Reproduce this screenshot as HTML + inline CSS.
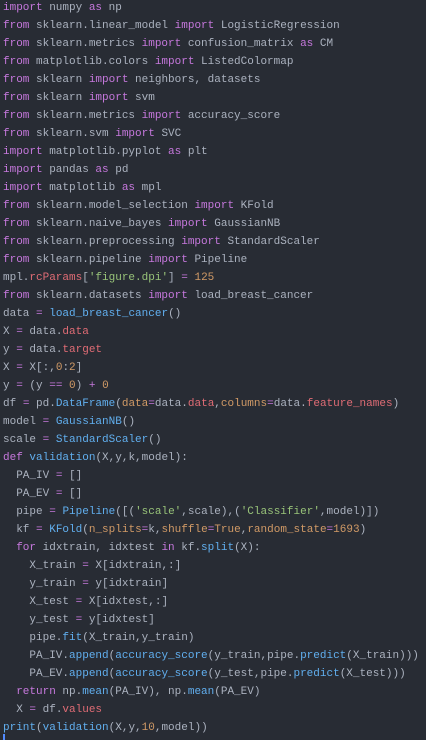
<!DOCTYPE html><html><head><style>
html,body{margin:0;padding:0;background:#282c34;width:426px;height:740px;overflow:hidden}
pre{margin:0;padding:0 0 0 3px;position:absolute;top:-1px;left:0;font-family:"Liberation Mono",monospace;font-size:11px;line-height:18px;color:#abb2bf;white-space:pre}
.k{color:#c678dd}.f{color:#61afef}.s{color:#98c379}.n{color:#d19a66}.r{color:#e06c75}
#cur{position:absolute;left:3px;top:734px;width:2px;height:6px;background:#528bff}
</style></head><body><pre><span class="k">import</span> numpy <span class="k">as</span> np
<span class="k">from</span> sklearn.linear_model <span class="k">import</span> LogisticRegression
<span class="k">from</span> sklearn.metrics <span class="k">import</span> confusion_matrix <span class="k">as</span> CM
<span class="k">from</span> matplotlib.colors <span class="k">import</span> ListedColormap
<span class="k">from</span> sklearn <span class="k">import</span> neighbors, datasets
<span class="k">from</span> sklearn <span class="k">import</span> svm
<span class="k">from</span> sklearn.metrics <span class="k">import</span> accuracy_score
<span class="k">from</span> sklearn.svm <span class="k">import</span> SVC
<span class="k">import</span> matplotlib.pyplot <span class="k">as</span> plt
<span class="k">import</span> pandas <span class="k">as</span> pd
<span class="k">import</span> matplotlib <span class="k">as</span> mpl
<span class="k">from</span> sklearn.model_selection <span class="k">import</span> KFold
<span class="k">from</span> sklearn.naive_bayes <span class="k">import</span> GaussianNB
<span class="k">from</span> sklearn.preprocessing <span class="k">import</span> StandardScaler
<span class="k">from</span> sklearn.pipeline <span class="k">import</span> Pipeline
mpl.<span class="r">rcParams</span>[<span class="s">'figure.dpi'</span>] <span class="k">=</span> <span class="n">125</span>
<span class="k">from</span> sklearn.datasets <span class="k">import</span> load_breast_cancer
data <span class="k">=</span> <span class="f">load_breast_cancer</span>()
X <span class="k">=</span> data.<span class="r">data</span>
y <span class="k">=</span> data.<span class="r">target</span>
X <span class="k">=</span> X[:,<span class="n">0</span>:<span class="n">2</span>]
y <span class="k">=</span> (y <span class="k">==</span> <span class="n">0</span>) <span class="k">+</span> <span class="n">0</span>
df <span class="k">=</span> pd.<span class="f">DataFrame</span>(<span class="n">data</span><span class="k">=</span>data.<span class="r">data</span>,<span class="n">columns</span><span class="k">=</span>data.<span class="r">feature_names</span>)
model <span class="k">=</span> <span class="f">GaussianNB</span>()
scale <span class="k">=</span> <span class="f">StandardScaler</span>()
<span class="k">def</span> <span class="f">validation</span>(X,y,k,model):
  PA_IV <span class="k">=</span> []
  PA_EV <span class="k">=</span> []
  pipe <span class="k">=</span> <span class="f">Pipeline</span>([(<span class="s">'scale'</span>,scale),(<span class="s">'Classifier'</span>,model)])
  kf <span class="k">=</span> <span class="f">KFold</span>(<span class="n">n_splits</span><span class="k">=</span>k,<span class="n">shuffle</span><span class="k">=</span><span class="n">True</span>,<span class="n">random_state</span><span class="k">=</span><span class="n">1693</span>)
  <span class="k">for</span> idxtrain, idxtest <span class="k">in</span> kf.<span class="f">split</span>(X):
    X_train <span class="k">=</span> X[idxtrain,:]
    y_train <span class="k">=</span> y[idxtrain]
    X_test <span class="k">=</span> X[idxtest,:]
    y_test <span class="k">=</span> y[idxtest]
    pipe.<span class="f">fit</span>(X_train,y_train)
    PA_IV.<span class="f">append</span>(<span class="f">accuracy_score</span>(y_train,pipe.<span class="f">predict</span>(X_train)))
    PA_EV.<span class="f">append</span>(<span class="f">accuracy_score</span>(y_test,pipe.<span class="f">predict</span>(X_test)))
  <span class="k">return</span> np.<span class="f">mean</span>(PA_IV), np.<span class="f">mean</span>(PA_EV)
  X <span class="k">=</span> df.<span class="r">values</span>
<span class="f">print</span>(<span class="f">validation</span>(X,y,<span class="n">10</span>,model))</pre><div id="cur"></div></body></html>
